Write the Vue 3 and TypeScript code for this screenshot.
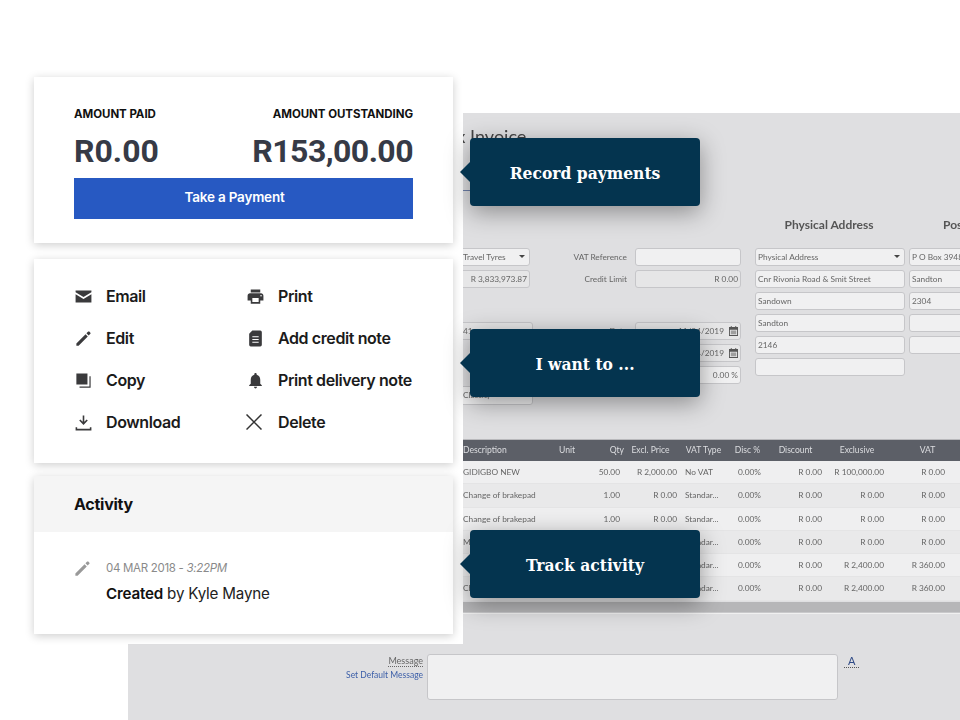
<template>
  <div class="stage">
    <!-- app screenshot in the background -->
    <div class="screen">
      <div class="sheet">
        <h1 class="title">Tax Invoice</h1>
        <div class="tab">Details</div>

        <div class="heads">
          <span class="head-physical">Physical Address</span>
          <span class="head-postal">Postal Address</span>
        </div>

        <div class="form">
          <div class="col col-a">
            <div class="field select">Travel Tyres<i class="caret"></i></div>
            <div class="field right ro">R 3,833,973.87</div>
            <div class="field group-start ro wide">41</div>
            <div class="field wide template">Classic)<i class="caret"></i></div>
          </div>
          <div class="col col-b">
            <div class="line"><label>VAT Reference</label><div class="field"></div></div>
            <div class="line"><label>Credit Limit</label><div class="field right ro">R 0.00</div></div>
            <div class="line group-start">
              <label>Date</label>
              <div class="field right ro">11/04/2019<svg class="cal" viewBox="0 0 10 11"><path d="M0 1h2V0h1v1h4V0h1v1h2v10H0zm1 3v6h8V4z" fill-rule="evenodd" /><path d="M2 5h6v4H2z" opacity=".5" /></svg></div>
            </div>
            <div class="line">
              <label>Due Date</label>
              <div class="field right ro">11/04/2019<svg class="cal" viewBox="0 0 10 11"><path d="M0 1h2V0h1v1h4V0h1v1h2v10H0zm1 3v6h8V4z" fill-rule="evenodd" /><path d="M2 5h6v4H2z" opacity=".5" /></svg></div>
            </div>
            <div class="line"><label>Discount</label><div class="field right">0.00 %</div></div>
          </div>
          <div class="col col-c">
            <div class="field select">Physical Address<i class="caret"></i></div>
            <div class="field">Cnr Rivonia Road &amp; Smit Street</div>
            <div class="field">Sandown</div>
            <div class="field">Sandton</div>
            <div class="field">2146</div>
            <div class="field"></div>
          </div>
          <div class="col col-d">
            <div class="field">P O Box 3948</div>
            <div class="field">Sandton</div>
            <div class="field">2304</div>
            <div class="field"></div>
            <div class="field"></div>
          </div>
        </div>

        <div class="table">
          <div class="tr th">
            <span class="desc">Description</span>
            <span class="unit">Unit</span>
            <span class="qty">Qty</span>
            <span class="mid nudge">Excl. Price</span>
            <span class="mid nudge">VAT Type</span>
            <span class="mid">Disc %</span>
            <span class="mid">Discount</span>
            <span class="mid">Exclusive</span>
            <span class="mid vat-head">VAT</span>
            <span></span>
          </div>
          <div v-for="(row, i) in rows" :key="i" class="tr">
            <span class="desc">{{ row.desc }}</span>
            <span></span>
            <span class="num">{{ row.qty }}</span>
            <span class="num">{{ row.price }}</span>
            <span class="type">{{ row.type }}</span>
            <span class="num">0.00%</span>
            <span class="num">R 0.00</span>
            <span class="num">{{ row.excl }}</span>
            <span class="num">{{ row.vat }}</span>
            <span class="num">{{ row.total }}</span>
          </div>
        </div>
        <div class="scrollbar"></div>
      </div>

      <div class="message">
        <div class="message-labels">
          <span class="message-label">Message</span>
          <a class="message-link">Set Default Message</a>
        </div>
        <div class="message-box"></div>
        <span class="message-a">A</span>
      </div>
    </div>

    <!-- white cards on the left -->
    <div class="panel">
      <section class="card pay">
        <div class="amounts">
          <div>
            <div class="amount-label">AMOUNT PAID</div>
            <div class="amount">R0.00</div>
          </div>
          <div class="amount-end">
            <div class="amount-label">AMOUNT OUTSTANDING</div>
            <div class="amount tight">R153,00.00</div>
          </div>
        </div>
        <button class="pay-btn">Take a Payment</button>
      </section>

      <section class="card actions">
        <div v-for="action in actions" :key="action.label" class="action">
          <span class="action-icon">
            <svg v-if="action.stroke" viewBox="0 0 16 16" width="16" height="16"><path :d="action.path" fill="none" stroke="#333" stroke-width="1.5" /></svg>
            <svg v-else viewBox="0 0 24 24" width="19" height="19"><path :d="action.path" fill="#3a3a3c" fill-rule="evenodd" /></svg>
          </span>
          <span>{{ action.label }}</span>
        </div>
      </section>

      <section class="card activity">
        <h2 class="activity-head">Activity</h2>
        <div class="activity-body">
          <svg class="activity-icon" viewBox="0 0 24 24" width="19" height="19"><path :d="editPath" fill="#999" /></svg>
          <div>
            <div class="activity-date">04 MAR 2018 - <em>3:22PM</em></div>
            <div class="activity-text"><strong>Created</strong> by Kyle Mayne</div>
          </div>
        </div>
      </section>
    </div>

    <!-- callouts -->
    <div v-for="note in callouts" :key="note.text" class="callout" :style="{ top: note.top + 'px' }">
      {{ note.text }}
    </div>
  </div>
</template>

<script setup lang="ts">
interface Action {
  label: string;
  path: string;
  stroke?: boolean;
}

interface Row {
  desc: string;
  qty: string;
  price: string;
  type: string;
  excl: string;
  vat: string;
  total: string;
}

const editPath =
  'M3 18.200L3 21l2.800 0L17.400 9.400l-2.800-2.800zM15.700 5.500l2.800 2.800 2.200-2.200c.4-.4.4-1 0-1.400l-1.400-1.400c-.4-.4-1-.4-1.400 0z';

const actions: Action[] = [
  {
    label: 'Email',
    path: 'M22 4.500H2v2.200l10 6 10-6zM2 9v10.500h20V9l-10 6z',
  },
  {
    label: 'Print',
    path: 'M19 8H5c-1.660 0-3 1.340-3 3v6h4v4h12v-4h4v-6c0-1.660-1.340-3-3-3zm-3 11H8v-5h8v5zm3-7c-.55 0-1-.45-1-1s.45-1 1-1 1 .45 1 1-.45 1-1 1zm-1-9H6v4h12V3z',
  },
  { label: 'Edit', path: editPath },
  {
    label: 'Add credit note',
    path: 'M8 2h10a2 2 0 0 1 2 2v16a2 2 0 0 1-2 2H6a2 2 0 0 1-2-2V6zM8 9v1.500h8V9zm0 3.500V14h8v-1.500zM8 16v1.500h8V16z',
  },
  {
    label: 'Copy',
    path: 'M3 3h14v14H3zM19.500 6.500H21V21H7v-1.500h12.500z',
  },
  {
    label: 'Print delivery note',
    path: 'M12 22c1.100 0 2-.9 2-2h-4c0 1.100.9 2 2 2zm6-6v-5c0-3.070-1.630-5.640-4.500-6.320V4c0-.83-.67-1.500-1.500-1.500s-1.500.67-1.500 1.500v.68C7.640 5.360 6 7.920 6 11v5l-2 2v1h16v-1l-2-2z',
  },
  {
    label: 'Download',
    path: 'M11 3h2v8.200l3-3 1.400 1.400L12 15l-5.400-5.400L8 8.200l3 3zM2 18h2v2h16v-2h2v4H2z',
  },
  { label: 'Delete', path: 'M.5.5l15 15M15.500.5l-15 15', stroke: true },
];

const rows: Row[] = [
  { desc: 'GIDIGBO NEW', qty: '50.00', price: 'R 2,000.00', type: 'No VAT', excl: 'R 100,000.00', vat: 'R 0.00', total: 'R 100,000.00' },
  { desc: 'Change of brakepad', qty: '1.00', price: 'R 0.00', type: 'Standar...', excl: 'R 0.00', vat: 'R 0.00', total: 'R 0.00' },
  { desc: 'Change of brakepad', qty: '1.00', price: 'R 0.00', type: 'Standar...', excl: 'R 0.00', vat: 'R 0.00', total: 'R 0.00' },
  { desc: 'Mileage', qty: '1.00', price: 'R 0.00', type: 'Standar...', excl: 'R 0.00', vat: 'R 0.00', total: 'R 0.00' },
  { desc: '', qty: '1.00', price: 'R 2,400.00', type: 'Standar...', excl: 'R 2,400.00', vat: 'R 360.00', total: 'R 2,760.00' },
  { desc: 'Change', qty: '1.00', price: 'R 2,400.00', type: 'Standar...', excl: 'R 2,400.00', vat: 'R 360.00', total: 'R 2,760.00' },
];

const callouts = [
  { text: 'Record payments', top: 138 },
  { text: 'I want to ...', top: 329 },
  { text: 'Track activity', top: 530 },
];
</script>

<style>
body {
  margin: 0;
  background: #fff;
}
</style>

<style scoped>
.stage {
  position: relative;
  width: 960px;
  height: 720px;
  overflow: hidden;
  background: #fff;
  font-family: Inter, "Liberation Sans", sans-serif;
}

.screen {
  position: absolute;
  left: 128px;
  top: 113px;
  width: 832px;
  height: 607px;
  overflow: hidden;
  background: #dfdfe1;
  font-family: Lato, "Liberation Sans", sans-serif;
  color: #666;
  font-size: 8.3px;
  filter: blur(0.25px);
}

.sheet {
  margin-left: 335px;
  width: 497px;
}

.title {
  margin: 0 0 0 -24px;
  padding-top: 11px;
  font-size: 18px;
  line-height: 24px;
  font-weight: 400;
  color: #444;
}

.tab {
  margin: 27px 0 0 -40px;
  width: 47px;
  height: 15px;
  line-height: 13px;
  font-size: 10px;
  color: #3b5ea8;
  border-bottom: 1px solid #6d7fa8;
}

.heads {
  display: flex;
  height: 20px;
  margin-top: 24px;
  font-size: 12px;
  font-weight: 700;
  color: #555;
  line-height: 20px;
  white-space: nowrap;
}

.head-physical {
  width: 148px;
  margin-left: 292px;
  text-align: center;
  flex: none;
}

.head-postal {
  margin-left: 40px;
  flex: none;
}

.form {
  display: flex;
  margin-top: 13px;
  height: 191px;
  border-bottom: 1px solid #b9b9bc;
}

.col {
  display: flex;
  flex-direction: column;
  gap: 4px;
}

.col-a {
  margin-left: -8px;
  width: 75px;
  flex: none;
}

.col-b {
  width: 211px;
  flex: none;
}

.col-c {
  width: 150px;
  flex: none;
  margin-left: 14px;
}

.col-d {
  width: 90px;
  flex: none;
  margin-left: 4px;
}

.line {
  display: flex;
  align-items: center;
  justify-content: flex-end;
  gap: 8px;
}

.line label {
  color: #666;
}

.line .field {
  width: 106px;
  flex: none;
}

.field {
  position: relative;
  box-sizing: border-box;
  height: 18px;
  line-height: 16px;
  padding: 0 2px;
  background: #f0f0f1;
  border: 1px solid #c6c6c9;
  border-radius: 3px;
  white-space: nowrap;
  overflow: hidden;
  color: #666;
}

.col-a .field {
  padding-left: 7px;
}

.col-a .wide {
  width: 78px;
}

.ro {
  background: #e6e6e7;
}

.right {
  text-align: right;
}

.group-start {
  margin-top: 30px;
}

.template {
  margin-top: 42px;
  height: 19px;
}

.caret {
  position: absolute;
  right: 4px;
  top: 6px;
  border: 3.5px solid transparent;
  border-top: 3.5px solid #444;
  border-bottom: 0;
}

.cal {
  width: 9px;
  height: 10px;
  margin-left: 5px;
  vertical-align: -2px;
  fill: #555;
}

.tr {
  display: grid;
  grid-template-columns: 92px 35px 34px 57px 49px 35px 61px 62px 61px 71px;
  height: 23.3px;
  line-height: 22px;
  background: #efeff0;
  border-bottom: 1px solid #e4e4e5;
  box-sizing: border-box;
  white-space: nowrap;
}

.tr:nth-child(odd) {
  background: #e9e9ea;
}

.tr.th {
  height: 21px;
  line-height: 20px;
  font-size: 8.6px;
  background: #5c5f67;
  border-bottom: 0;
  color: #dcdde0;
}

.unit {
  padding-left: 4px;
}

.qty {
  text-align: right;
}

.mid {
  text-align: center;
}

.nudge {
  padding-right: 4px;
}

.vat-head {
  padding-left: 18px;
}

.num {
  text-align: right;
  padding-right: 4px;
}

.type {
  padding-left: 4px;
}

.scrollbar {
  height: 10px;
  margin-top: 1px;
  background: #b6b6b8;
  border-bottom: 1px solid #c9c9cb;
  box-shadow: 0 1px 0 #f0f0f0;
}

.message {
  display: flex;
  align-items: flex-start;
  margin-top: 41px;
}

.message-labels {
  display: flex;
  flex-direction: column;
  align-items: flex-end;
  gap: 3px;
  width: 295px;
  padding-top: 2px;
  font-size: 9px;
}

.message-label {
  border-bottom: 1px dotted #666;
  line-height: 10px;
}

.message-link {
  color: #3b5ea8;
  font-size: 8.5px;
  line-height: 11px;
}

.message-box {
  box-sizing: border-box;
  width: 411px;
  height: 46px;
  margin-left: 4px;
  background: #f0f0f1;
  border: 1px solid #c6c6c9;
  border-radius: 3px;
}

.message-a {
  margin-left: 6px;
  margin-top: 1px;
  padding: 0 4px;
  line-height: 12px;
  font-size: 11px;
  color: #2f4a86;
  border-bottom: 1px dotted #555;
}

.panel {
  position: absolute;
  left: 26px;
  top: 77px;
  width: 437px;
  height: 567px;
  box-sizing: border-box;
  padding: 0 10px 0 8px;
  background: #fff;
  display: flex;
  flex-direction: column;
}

.card {
  background: #fff;
  box-shadow: 0 2px 9px rgba(0, 0, 0, 0.2);
}

.pay {
  box-sizing: border-box;
  height: 166px;
  padding: 29px 40px 0;
}

.amounts {
  display: flex;
  justify-content: space-between;
}

.amount-end {
  text-align: right;
}

.amount-label {
  font-size: 11.5px;
  line-height: 16px;
  font-weight: 700;
  letter-spacing: -0.05px;
  color: #111;
}

.amount {
  margin-top: 9px;
  font-family: Roboto, "Liberation Sans", sans-serif;
  font-size: 32px;
  line-height: 40px;
  font-weight: 700;
  color: #363a46;
}

.amount.tight {
  letter-spacing: -0.55px;
}

.pay-btn {
  display: block;
  box-sizing: border-box;
  width: 339px;
  height: 41px;
  margin-top: 7px;
  padding: 0 18px 4px 0;
  border: 0;
  background: #2759c2;
  color: #fff;
  font-family: inherit;
  font-size: 13.5px;
  font-weight: 600;
  letter-spacing: -0.2px;
}

.actions {
  box-sizing: border-box;
  height: 204px;
  margin-top: 16px;
  padding: 16px 0 0 40px;
  display: grid;
  grid-template-columns: 172px 1fr;
  grid-auto-rows: 42px;
}

.action {
  display: flex;
  align-items: center;
  font-size: 16px;
  font-weight: 600;
  letter-spacing: -0.4px;
  color: #1b1b1b;
}

.action-icon {
  display: flex;
  align-items: center;
  width: 32px;
  flex: none;
}

.activity {
  height: 158px;
  margin-top: 13px;
}

.activity-head {
  box-sizing: border-box;
  height: 56px;
  margin: 0;
  padding-left: 40px;
  line-height: 57px;
  background: #f5f5f5;
  font-size: 16px;
  font-weight: 700;
  letter-spacing: -0.25px;
  color: #111;
}

.activity-body {
  display: flex;
  padding: 27px 0 0 39px;
}

.activity-icon {
  margin-right: 14px;
  flex: none;
}

.activity-date {
  font-size: 11.5px;
  line-height: 18px;
  letter-spacing: -0.3px;
  color: #8a8a8a;
}

.activity-text {
  margin-top: 7px;
  font-size: 15.2px;
  line-height: 20px;
  letter-spacing: -0.2px;
  color: #222;
}

.activity-text strong {
  font-weight: 600;
  color: #111;
}

.callout {
  position: absolute;
  left: 470px;
  width: 230px;
  height: 68px;
  box-sizing: border-box;
  padding-top: 1px;
  display: flex;
  align-items: center;
  justify-content: center;
  background: #04344f;
  border-radius: 4px;
  box-shadow: 0 6px 24px rgba(0, 0, 0, 0.38);
  color: #fff;
  font-family: "DejaVu Serif", "Liberation Serif", serif;
  font-stretch: condensed;
  font-size: 17.3px;
  font-weight: 700;
}

.callout::before {
  content: "";
  position: absolute;
  left: -10px;
  top: 24px;
  border-top: 10px solid transparent;
  border-bottom: 10px solid transparent;
  border-right: 10px solid #04344f;
}
</style>
